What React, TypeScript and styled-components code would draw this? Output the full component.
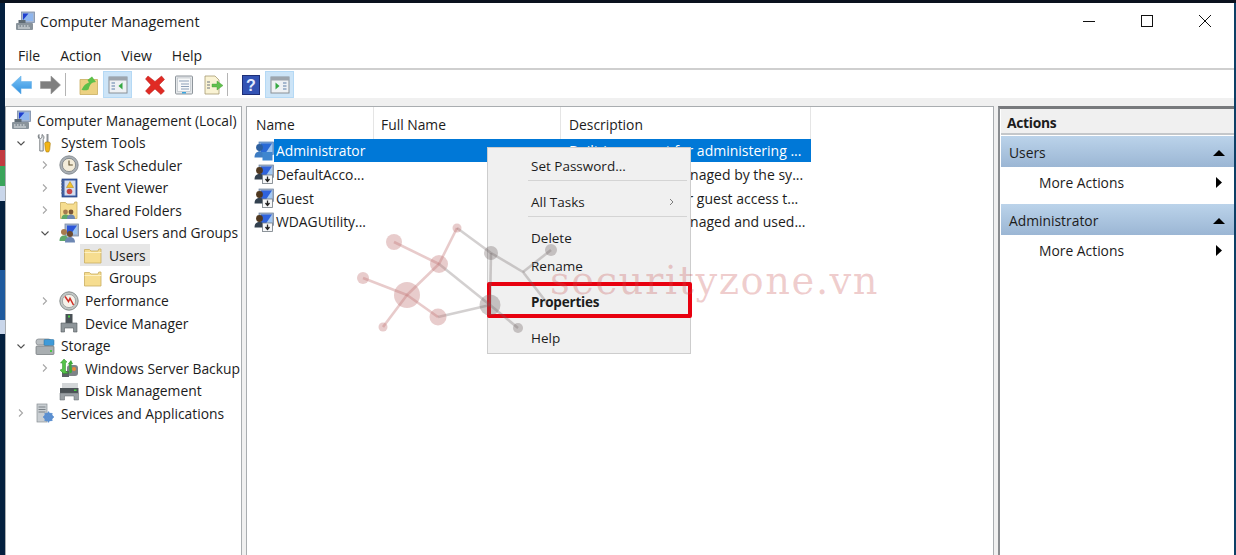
import React from "react";
import styled, { createGlobalStyle } from "styled-components";

const GlobalStyle = createGlobalStyle`
  html, body { margin: 0; padding: 0; background: #0a2340; }
  body { font-family: "Open Sans", "Noto Sans", "Liberation Sans", sans-serif; overflow: hidden; }
  * { box-sizing: border-box; }
`;

const Screen = styled.div`
  position: relative;
  width: 1236px;
  height: 555px;
  display: flex;
  flex-direction: column;
  background: #0a2340;
  overflow: hidden;
`;

const TopEdge = styled.div`
  height: 3px;
  flex: none;
  background: #0a121e;
`;

const Desk = styled.div`
  flex: 1;
  min-height: 0;
  display: flex;
`;

const DesktopStrip = styled.div`
  width: 5px;
  flex: none;
  display: flex;
  flex-direction: column;
  background: #04203f;
`;

const DesktopBit = styled.div<{ $h: number; $c?: string }>`
  height: ${({ $h }) => $h}px;
  flex: none;
  background: ${({ $c }) => $c || "transparent"};
`;

const RightEdge = styled.div`
  width: 2px;
  flex: none;
  background: #0d4066;
`;

const Win = styled.div`
  flex: 1;
  min-width: 0;
  display: flex;
  flex-direction: column;
  background: #fff;
  color: #1c1c1c;
`;

const TitleBar = styled.div`
  height: 38px;
  flex: none;
  display: flex;
  align-items: center;
  padding: 0 0 2px 10px;
  font-size: 14.3px;
`;

const TitleText = styled.span`
  margin-left: 5px;
  flex: 1;
`;

const WinButton = styled.div`
  width: 58px;
  height: 36px;
  display: flex;
  align-items: center;
  justify-content: center;
`;

const WinButtons = styled.div`
  display: flex;
`;

const MenuBar = styled.div`
  height: 29px;
  flex: none;
  display: flex;
  align-items: center;
  padding: 2px 0 0 13px;
  gap: 20px;
  font-size: 14px;
  border-bottom: 2px solid #cfcfcf;
`;

const Toolbar = styled.div`
  height: 28px;
  flex: none;
  display: flex;
  align-items: stretch;
  padding: 1px 0 0 2px;
`;

const ToolButton = styled.div<{ $on?: boolean }>`
  width: 29px;
  display: flex;
  align-items: center;
  justify-content: center;
  background: ${({ $on }) => ($on ? "#cce4f7" : "transparent")};
  box-shadow: ${({ $on }) => ($on ? "inset 0 0 0 1px #b5d9f5" : "none")};
`;

const ToolSep = styled.div<{ $w: number; $hide?: boolean }>`
  width: ${({ $w }) => $w}px;
  margin: 2px 0;
  border-left: 1px solid ${({ $hide }) => ($hide ? "transparent" : "#b4b4b4")};
`;

const Panes = styled.div`
  flex: 1;
  min-height: 0;
  display: grid;
  grid-template-columns: 237px 748px 237px;
  column-gap: 4px;
  padding-top: 8px;
  background: #f0f0f0;
`;

const TreePane = styled.div`
  background: #fff;
  border: 1px solid #a9adb0;
  border-bottom: 0;
  padding-top: 2px;
  overflow: hidden;
  font-size: 13.85px;
  white-space: nowrap;
`;

const TreeRow = styled.div<{ $level: number }>`
  height: 22.54px;
  display: flex;
  align-items: center;
  padding-left: ${({ $level }) => ($level === 0 ? 2 : 7 + 24 * ($level - 1))}px;
`;

const Twisty = styled.span`
  width: 16px;
  flex: none;
  margin-right: 3px;
  display: flex;
  justify-content: center;
`;

const TreeNode = styled.div<{ $active?: boolean }>`
  display: inline-flex;
  align-items: center;
  height: 22px;
  gap: 6px;
  padding: 0 4px 0 3px;
  background: ${({ $active }) => ($active ? "#e6e6e6" : "transparent")};
`;

const ListPane = styled.div`
  position: relative;
  background: #fff;
  border: 1px solid #a9adb0;
  border-bottom: 0;
  font-size: 13.85px;
`;

const ListHead = styled.div`
  height: 32px;
  display: flex;
  align-items: center;
  padding-left: 1px;
`;

const HeadCell = styled.div<{ $w: number; $pad?: number }>`
  width: ${({ $w }) => $w}px;
  height: 100%;
  padding-left: ${({ $pad }) => $pad ?? 8}px;
  padding-top: 2px;
  display: flex;
  align-items: center;
  border-right: 1px solid #e5e5e5;
`;

const ListRow = styled.div`
  height: 23.67px;
  display: flex;
  align-items: center;
  padding-left: 7px;
  white-space: nowrap;
`;

const RowBody = styled.div<{ $active?: boolean }>`
  width: 537px;
  height: 23px;
  display: flex;
  align-items: center;
  padding-left: 2px;
  color: ${({ $active }) => ($active ? "#fff" : "inherit")};
  background: ${({ $active }) => ($active ? "#0078d7" : "transparent")};
`;

const RowName = styled.span`
  width: 293px;
  flex: none;
`;

const RowText = styled.span`
  font-size: 14px;
`;

const ContextMenu = styled.div`
  position: absolute;
  left: 240px;
  top: 40px;
  width: 204px;
  padding: 4px 0 1px;
  background: #f0f0f0;
  border: 1px solid #cdcdcd;
  font-size: 13.5px;
  z-index: 2;
`;

const MenuItem = styled.div<{ $bold?: boolean }>`
  height: 28px;
  display: flex;
  align-items: center;
  justify-content: space-between;
  padding: 0 16px 0 43px;
  font-weight: ${({ $bold }) => ($bold ? 700 : 400)};
  letter-spacing: ${({ $bold }) => ($bold ? "-0.2px" : "0")};
`;

const MenuSep = styled.div<{ $hide?: boolean }>`
  height: 8px;
  margin-left: 40px;
  margin-right: 3px;
  &::before {
    content: "";
    display: block;
    height: 1px;
    background: ${({ $hide }) => ($hide ? "transparent" : "#d4d4d4")};
  }
`;

const RedBox = styled.div`
  position: absolute;
  left: -1px;
  right: -2px;
  top: 134px;
  height: 36px;
  border: 4px solid #e8000f;
  border-radius: 2px;
`;

const ActionsPane = styled.div`
  background: #fff;
  border-left: 2px solid #8a8d90;
  border-top: 3px solid #77797c;
  padding-left: 1px;
  font-size: 13.85px;
`;

const ActionsHead = styled.div`
  height: 26px;
  display: flex;
  align-items: center;
  padding: 2px 0 0 6px;
  background: #f0f0f0;
  border-bottom: 2px solid #c4c7ca;
  font-weight: 700;
  letter-spacing: -0.3px;
`;

const ActionGroup = styled.div`
  height: 31px;
  display: flex;
  align-items: center;
  justify-content: space-between;
  padding: 2px 10px 0 8px;
  margin-top: 1px;
  background: linear-gradient(#bbd3ea, #9bb6d4);
`;

const ActionRow = styled.div`
  height: 36px;
  display: flex;
  align-items: center;
  justify-content: space-between;
  padding: 0 13px 5px 38px;
`;

const WatermarkArt = styled.svg`
  position: absolute;
  left: 350px;
  top: 220px;
  pointer-events: none;
  z-index: 3;
`;

const WatermarkText = styled.div`
  position: absolute;
  left: 550px;
  top: 258px;
  font-family: "DejaVu Serif", serif;
  font-size: 38.5px;
  letter-spacing: 1.5px;
  line-height: 46px;
  color: rgba(200, 80, 80, 0.28);
  pointer-events: none;
  z-index: 3;
`;

type IconProps = { size?: number };

const Svg = ({ size = 20, children }: IconProps & { children: React.ReactNode }) => (
  <svg width={size} height={size} viewBox="0 0 20 20" style={{ flex: "none", display: "block" }}>
    {children}
  </svg>
);

const ComputerIcon = () => (
  <Svg>
    <rect x="6.5" y="1" width="13" height="10.5" fill="#a4b6d0" stroke="#7c8ca6" strokeWidth="0.8" />
    <rect x="8" y="2.5" width="10" height="7.5" fill="#8fb6ee" />
    <path d="M8 2.5h5.5L8 9z" fill="#1e3fd0" />
    <rect x="1" y="12" width="17" height="7" rx="1" fill="#89939b" />
    <rect x="3.5" y="9" width="7" height="3" fill="#5f6b74" />
    <path d="M3 15h1.5M6 15h1.5M9 15h1.5M12 15h1.5M3 17h12" stroke="#e6eaec" strokeWidth="1" />
  </Svg>
);

const ToolsIcon = () => (
  <Svg>
    <path d="M4 1.5v3l1.5 1 1.5-1v-3c2 1 2.6 3.3 1.2 5v11.5H4.8V6.5C3.2 5 2.5 3 4 1.5z" fill="#eceef0" stroke="#6e7478" strokeWidth="0.9" />
    <rect x="11.5" y="1" width="2" height="8" fill="#8d9296" />
    <path d="M10.5 9h4l.8 1.5-.6 6-1 2.5h-2.4l-1-2.5-.6-6z" fill="#f2b517" stroke="#a97b08" strokeWidth="0.6" />
  </Svg>
);

const ClockIcon = () => (
  <Svg>
    <circle cx="10" cy="10" r="9.2" fill="#a9afb4" stroke="#7c8388" strokeWidth="0.8" />
    <circle cx="10" cy="10" r="6.6" fill="#f3ecd9" stroke="#6e7478" strokeWidth="0.7" />
    <path d="M10 5.5V10h3.8" fill="none" stroke="#5b4c2a" strokeWidth="1.1" />
  </Svg>
);

const EventIcon = () => (
  <Svg>
    <rect x="3" y="1" width="15" height="18" fill="#3c5fa8" stroke="#24407e" strokeWidth="0.7" />
    <rect x="5.5" y="2.5" width="11" height="15" fill="#d5ddee" />
    <path d="M2 3h3M2 6h3M2 9h3M2 12h3M2 15h3" stroke="#5a6a8c" strokeWidth="1" />
    <path d="M11 3.5l3.5 6h-7z" fill="#f3c22a" stroke="#a8810e" strokeWidth="0.5" />
    <circle cx="10.5" cy="13.5" r="2.8" fill="#c9474a" />
  </Svg>
);

const FolderIcon = ({ size = 20 }: IconProps) => (
  <Svg size={size}>
    <path d="M1.5 4.5h5l1.5 1.5h7l.8-2 2.2 0v14h-16.5z" fill="#f6dd90" stroke="#c9ad5f" strokeWidth="0.8" />
    <path d="M1.5 7.5h17" stroke="#fdf1c4" strokeWidth="1" />
  </Svg>
);

const SharedIcon = () => (
  <Svg>
    <path d="M1.5 2.5h5l1.5 1.5h7l.8-2 2.2 0v16.5h-16.5z" fill="#f6dd90" stroke="#c9ad5f" strokeWidth="0.8" />
    <circle cx="6.5" cy="12" r="2.4" fill="#a67a4e" />
    <path d="M2.5 19c0-3.5 1.8-4.5 4-4.5s4 1 4 4.5z" fill="#5fa86a" />
    <circle cx="12" cy="12" r="2.4" fill="#7a5637" />
    <path d="M8 19c0-3.5 1.8-4.5 4-4.5s4 1 4 4.5z" fill="#6d87b3" />
  </Svg>
);

const LocalUsersIcon = () => (
  <Svg>
    <rect x="6" y="1" width="13.5" height="12" fill="#a4b6d0" stroke="#7c8ca6" strokeWidth="0.8" />
    <rect x="8" y="2.5" width="10" height="8.5" fill="#2c56d8" />
    <path d="M18 2.5v8.5h-6z" fill="#9cc4f0" />
    <circle cx="5" cy="9" r="3" fill="#a67a4e" />
    <path d="M.5 18c0-4 2-5.5 4.5-5.5s4.5 1.5 4.5 5.5z" fill="#5fa86a" />
    <circle cx="11" cy="11" r="3" fill="#6b4a2e" />
    <path d="M6 19.5c0-4 2.3-5.5 5-5.5s5 1.5 5 5.5z" fill="#6d87b3" />
  </Svg>
);

const PerformanceIcon = () => (
  <Svg>
    <circle cx="10" cy="10" r="9.2" fill="#c2c6c4" stroke="#7e8583" strokeWidth="0.9" />
    <circle cx="10" cy="10" r="6.6" fill="#f6f2ea" stroke="#8b9190" strokeWidth="0.7" />
    <path d="M6 5.5l3.5 5 1.5-3 3.5 6.5" fill="none" stroke="#cf2b22" strokeWidth="1.5" />
  </Svg>
);

const DeviceIcon = () => (
  <Svg>
    <rect x="6.5" y="1" width="7" height="9" fill="#4b5257" />
    <rect x="9" y="2.5" width="2" height="2" fill="#4fd04a" />
    <path d="M2 10h16v9h-3.5v-4h-9v4H2z" fill="#8f969a" stroke="#555c60" strokeWidth="0.6" />
  </Svg>
);

const StorageIcon = () => (
  <Svg>
    <rect x="1" y="3" width="15" height="6" rx="2.5" fill="#b9bec1" stroke="#7b8185" strokeWidth="0.7" />
    <rect x="9" y="3.5" width="10" height="6" rx="1" fill="#3f9ad8" stroke="#2a6e9f" strokeWidth="0.5" />
    <rect x="1" y="10" width="18" height="8.5" rx="1" fill="#a9aeb1" stroke="#6d7377" strokeWidth="0.7" />
    <rect x="15" y="14" width="2" height="2" fill="#48c844" />
  </Svg>
);

const BackupIcon = () => (
  <Svg>
    <rect x="8" y="7" width="11" height="11" rx="3" fill="#7e8488" />
    <rect x="3" y="13" width="7" height="6" fill="#5c6266" />
    <path d="M5 1l3 3-1.5.5V13l3 2-5 .5-3.5-3.5 2.5-1V5L1.5 5z" fill="#55c348" stroke="#2a8a26" strokeWidth="0.5" />
    <path d="M12 2l2 4-1.5.3.5 8-2.5 1.5-.5-9.5-1.5.2z" fill="#3fa83a" />
    <circle cx="15" cy="11" r="2" fill="#e88a3a" />
  </Svg>
);

const DiskIcon = () => (
  <Svg>
    <rect x="3" y="2" width="16" height="6" fill="#d3d6d8" />
    <rect x="1" y="7" width="18.5" height="5" fill="#4b5256" />
    <rect x="15" y="8.5" width="2.5" height="1.5" fill="#48d044" />
    <path d="M1 12h18.5v7H15v-4H5.5v4H1z" fill="#9aa0a4" stroke="#5f6569" strokeWidth="0.5" />
  </Svg>
);

const ServicesIcon = () => (
  <Svg>
    <rect x="2" y="1" width="10" height="18" fill="#c9ced2" stroke="#888f94" strokeWidth="0.7" />
    <path d="M3.5 4h7M3.5 6.5h7M3.5 9h7" stroke="#7a8187" strokeWidth="1" />
    <circle cx="13.5" cy="14" r="4.6" fill="#5b8fd0" />
    <circle cx="13.5" cy="14" r="1.8" fill="#e8eef6" />
    <path d="M13.5 8.5v11M8 14h11M9.7 10.2l7.6 7.6M17.3 10.2l-7.6 7.6" stroke="#5b8fd0" strokeWidth="1.3" />
  </Svg>
);

const UserDownIcon = () => (
  <Svg>
    <rect x="5" y="1" width="14.5" height="12.5" fill="#9fb2cc" stroke="#6d7f99" strokeWidth="0.7" />
    <rect x="7" y="2.5" width="11" height="9" fill="#2f63dc" />
    <path d="M18 2.5v9h-6z" fill="#a3c8f2" />
    <circle cx="5.5" cy="6.5" r="3.4" fill="#50381f" />
    <path d="M.5 15.5c0-4 2.2-5.5 5-5.5s5 1.5 5 5.5z" fill="#33414f" />
    <rect x="8.5" y="11" width="10" height="8.5" fill="#f6f7f8" stroke="#737b82" strokeWidth="0.8" />
    <path d="M13.5 12.5v4M11.5 15l2 2.5 2-2.5" fill="none" stroke="#222" strokeWidth="1.3" />
  </Svg>
);

const AdminIcon = () => (
  <Svg>
    <rect x="5" y="1" width="14.5" height="12.5" fill="#7fa7d8" stroke="#4f7db5" strokeWidth="0.7" />
    <rect x="7" y="2.5" width="11" height="9" fill="#2a6ad6" />
    <path d="M18 2.5v9h-6z" fill="#9cc6f2" />
    <circle cx="5.5" cy="6.5" r="3.4" fill="#2d5f9e" />
    <path d="M.5 16.5c0-4 2.2-6 5-6s5 2 5 6z" fill="#3d7cc2" />
    <rect x="8.5" y="11" width="10" height="8.5" fill="#3f86cf" />
  </Svg>
);

const BackIcon = () => (
  <svg width="21" height="20" viewBox="0 0 21 20" style={{ display: "block" }}>
    <defs>
      <linearGradient id="backArrow" x1="0" y1="0" x2="0" y2="1">
        <stop offset="0" stopColor="#7cc4f5" />
        <stop offset="1" stopColor="#2f8fe0" />
      </linearGradient>
    </defs>
    <path d="M10 1L.5 10l9.5 9v-5.5h10.5v-7H10z" fill="url(#backArrow)" stroke="#6cb4ea" strokeWidth="0.6" />
  </svg>
);

const ForwardIcon = () => (
  <svg width="21" height="20" viewBox="0 0 21 20" style={{ display: "block" }}>
    <path d="M11 1l9.5 9-9.5 9v-5.5H.5v-7H11z" fill="#7f7f7f" stroke="#969696" strokeWidth="0.6" />
  </svg>
);

const UpFolderIcon = () => (
  <Svg>
    <path d="M1 4.5h17.5v15H1z" fill="#ecd182" stroke="#c9ad5f" strokeWidth="0.8" />
    <path d="M3 14c1.5-3.5 4-5.5 7-6.5L8.5 5 13 1.500 17 7l-3 .5c-2.5 1-3.5 3.5-4.5 7-2 1-4 1-6.5 .5-.4-.4-.5-.6 0-1z" fill="#5dc04a" />
  </Svg>
);

const PaneLeftIcon = () => (
  <Svg>
    <rect x="1" y="2" width="18" height="16" fill="#eef1f4" stroke="#8a9097" strokeWidth="1" />
    <rect x="1" y="2" width="18" height="3.5" fill="#9da5ad" />
    <path d="M3.5 8h3.5M3.5 11h3.5M3.5 14h3.5" stroke="#5d7fa8" strokeWidth="1.2" />
    <path d="M14.5 7.5v7l-4-3.5z" fill="#36a842" />
  </Svg>
);

const PaneRightIcon = () => (
  <Svg>
    <rect x="1" y="2" width="18" height="16" fill="#eef1f4" stroke="#8a9097" strokeWidth="1" />
    <rect x="1" y="2" width="18" height="3.5" fill="#9da5ad" />
    <path d="M13 8h3.5M13 11h3.5M13 14h3.5" stroke="#5d7fa8" strokeWidth="1.2" />
    <path d="M5.5 7.5v7l4-3.5z" fill="#36a842" />
  </Svg>
);

const DeleteIcon = () => (
  <Svg>
    <path d="M3 1l7 5.5L16.5 1l3 3.5L14 10l5.5 6-3.5 3.5-6-5.5-6 5.5L.5 16 6 10 .5 4z" fill="#e02a24" stroke="#b81f1a" strokeWidth="0.5" />
  </Svg>
);

const PropertiesIcon = () => (
  <Svg>
    <rect x="1.5" y="1" width="17" height="18" rx="1" fill="#e4e7ea" stroke="#8e959b" strokeWidth="1" />
    <rect x="3.5" y="3" width="13" height="13.5" fill="#f8f9fa" stroke="#b5bbc0" strokeWidth="0.6" />
    <path d="M5 6h10M7 9h8M7 11.5h8M7 14h8" stroke="#8da0b8" strokeWidth="1" />
    <rect x="8" y="17" width="4" height="1.5" fill="#3aa5e0" />
  </Svg>
);

const ExportIcon = () => (
  <Svg>
    <path d="M2 1h10l4 4v14H2z" fill="#faf3d4" stroke="#a69a72" strokeWidth="0.8" />
    <path d="M4 7h3M4 10h3M4 13h3" stroke="#6b7480" strokeWidth="1.1" />
    <path d="M9 9h5V6l6 4.5-6 4.5v-3H9z" fill="#62c04e" stroke="#3d9a30" strokeWidth="0.4" />
  </Svg>
);

const HelpIcon = () => (
  <svg width="18" height="20" viewBox="0 0 18 20" style={{ display: "block" }}>
    <rect x="0.5" y="0.5" width="17" height="19" fill="#3353b4" stroke="#1e2f78" />
    <text x="9" y="16" textAnchor="middle" fontSize="16" fontWeight="700" fill="#e4ecff" fontFamily="Liberation Sans, sans-serif">?</text>
  </svg>
);

const Chevron = ({ open }: { open?: boolean }) => (
  <svg width="10" height="10" viewBox="0 0 10 10" style={{ display: "block" }}>
    <path
      d={open ? "M1.5 3.5L5 7l3.5-3.5" : "M3 1.5L6.5 5 3 8.5"}
      fill="none"
      stroke={open ? "#505050" : "#a6a6a6"}
      strokeWidth="1.1"
    />
  </svg>
);

const CollapseArrow = () => (
  <svg width="12" height="6" viewBox="0 0 12 6" style={{ display: "block" }}>
    <path d="M6 0l6 6H0z" fill="#000" />
  </svg>
);

const MoreArrow = () => (
  <svg width="6" height="11" viewBox="0 0 6 11" style={{ display: "block" }}>
    <path d="M0 0l6 5.5L0 11z" fill="#000" />
  </svg>
);

const SubArrow = () => (
  <svg width="5" height="8" viewBox="0 0 5 8" style={{ display: "block" }}>
    <path d="M1 1l3 3-3 3" fill="none" stroke="#707070" strokeWidth="0.9" />
  </svg>
);

const treeItems = [
  { level: 0, label: "Computer Management (Local)", icon: <ComputerIcon /> },
  { level: 1, label: "System Tools", icon: <ToolsIcon />, twisty: "open" },
  { level: 2, label: "Task Scheduler", icon: <ClockIcon />, twisty: "closed" },
  { level: 2, label: "Event Viewer", icon: <EventIcon />, twisty: "closed" },
  { level: 2, label: "Shared Folders", icon: <SharedIcon />, twisty: "closed" },
  { level: 2, label: "Local Users and Groups", icon: <LocalUsersIcon />, twisty: "open" },
  { level: 3, label: "Users", icon: <FolderIcon />, active: true },
  { level: 3, label: "Groups", icon: <FolderIcon /> },
  { level: 2, label: "Performance", icon: <PerformanceIcon />, twisty: "closed" },
  { level: 2, label: "Device Manager", icon: <DeviceIcon /> },
  { level: 1, label: "Storage", icon: <StorageIcon />, twisty: "open" },
  { level: 2, label: "Windows Server Backup", icon: <BackupIcon />, twisty: "closed" },
  { level: 2, label: "Disk Management", icon: <DiskIcon /> },
  { level: 1, label: "Services and Applications", icon: <ServicesIcon />, twisty: "closed" },
];

const users = [
  { name: "Administrator", text: "Built-in account for administering ...", active: true },
  { name: "DefaultAcco...", text: "A user account managed by the sy..." },
  { name: "Guest", text: "Built-in account for guest access t..." },
  { name: "WDAGUtility...", text: "A user account managed and used..." },
];

const netEdges = [
  [394, 242, 439, 264], [457, 228, 439, 264], [457, 228, 491, 253], [491, 253, 523, 272],
  [523, 272, 551, 250], [523, 272, 547, 303], [491, 253, 490, 305], [439, 264, 490, 305],
  [439, 264, 407, 295], [363, 278, 407, 295], [407, 295, 438, 317], [407, 295, 383, 327],
  [438, 317, 490, 305], [490, 305, 518, 328],
];

const netNodes = [
  [394, 242, 8], [457, 228, 4.5], [439, 264, 9], [491, 253, 7], [551, 250, 6], [363, 278, 6],
  [407, 295, 13], [438, 317, 8.5], [490, 305, 10.5], [518, 328, 5], [383, 327, 4.5],
];

const isGrey = (x: number) => x > 470;

export default function App() {
  return (
    <Screen>
      <GlobalStyle />
      <TopEdge />
      <Desk>
        <DesktopStrip>
          <DesktopBit $h={147} />
          <DesktopBit $h={16} $c="#c23a40" />
          <DesktopBit $h={20} $c="#3aa45a" />
          <DesktopBit $h={15} $c="#c9d6ea" />
          <DesktopBit $h={69} />
          <DesktopBit $h={50} $c="#1f5a9e" />
          <DesktopBit $h={14} $c="#c9d6ea" />
        </DesktopStrip>
        <Win>
          <TitleBar>
            <ComputerIcon />
            <TitleText>Computer Management</TitleText>
            <WinButtons>
              <WinButton>
                <svg width="12" height="12" viewBox="0 0 12 12"><path d="M0 6.5h12" stroke="#111" /></svg>
              </WinButton>
              <WinButton>
                <svg width="12" height="12" viewBox="0 0 12 12"><rect x="0.5" y="0.5" width="11" height="11" fill="none" stroke="#111" /></svg>
              </WinButton>
              <WinButton>
                <svg width="12" height="12" viewBox="0 0 12 12"><path d="M0 0l12 12M12 0L0 12" stroke="#111" /></svg>
              </WinButton>
            </WinButtons>
          </TitleBar>
          <MenuBar>
            <span>File</span>
            <span>Action</span>
            <span>View</span>
            <span>Help</span>
          </MenuBar>
          <Toolbar>
            <ToolButton><BackIcon /></ToolButton>
            <ToolButton><ForwardIcon /></ToolButton>
            <ToolSep $w={9} />
            <ToolButton><UpFolderIcon /></ToolButton>
            <ToolButton $on><PaneLeftIcon /></ToolButton>
            <ToolSep $w={8} $hide />
            <ToolButton><DeleteIcon /></ToolButton>
            <ToolButton><PropertiesIcon /></ToolButton>
            <ToolButton><ExportIcon /></ToolButton>
            <ToolSep $w={9} />
            <ToolButton><HelpIcon /></ToolButton>
            <ToolButton $on><PaneRightIcon /></ToolButton>
          </Toolbar>
          <Panes>
            <TreePane>
              {treeItems.map((item) => (
                <TreeRow key={item.label} $level={item.level}>
                  {item.level > 0 && (
                    <Twisty>{item.twisty && <Chevron open={item.twisty === "open"} />}</Twisty>
                  )}
                  <TreeNode $active={item.active}>
                    {item.icon}
                    <span>{item.label}</span>
                  </TreeNode>
                </TreeRow>
              ))}
            </TreePane>
            <ListPane>
              <ListHead>
                <HeadCell $w={126}>Name</HeadCell>
                <HeadCell $w={187} $pad={7}>Full Name</HeadCell>
                <HeadCell $w={250}>Description</HeadCell>
              </ListHead>
              {users.map((user) => (
                <ListRow key={user.name}>
                  {user.active ? <AdminIcon /> : <UserDownIcon />}
                  <RowBody $active={user.active}>
                    <RowName>{user.name}</RowName>
                    <RowText>{user.text}</RowText>
                  </RowBody>
                </ListRow>
              ))}
              <ContextMenu>
                <MenuItem>Set Password...</MenuItem>
                <MenuSep />
                <MenuItem>All Tasks<SubArrow /></MenuItem>
                <MenuSep />
                <MenuItem>Delete</MenuItem>
                <MenuItem>Rename</MenuItem>
                <MenuSep $hide />
                <MenuItem $bold>Properties</MenuItem>
                <MenuSep $hide />
                <MenuItem>Help</MenuItem>
                <RedBox />
              </ContextMenu>
            </ListPane>
            <ActionsPane>
              <ActionsHead>Actions</ActionsHead>
              <ActionGroup>Users<CollapseArrow /></ActionGroup>
              <ActionRow>More Actions<MoreArrow /></ActionRow>
              <ActionGroup>Administrator<CollapseArrow /></ActionGroup>
              <ActionRow>More Actions<MoreArrow /></ActionRow>
            </ActionsPane>
          </Panes>
        </Win>
        <RightEdge />
      </Desk>
      <WatermarkArt width="220" height="120" viewBox="350 220 220 120">
        {netEdges.map(([a, b, c, d]) => (
          <line
            key={`${a}-${b}-${c}-${d}`}
            x1={a}
            y1={b}
            x2={c}
            y2={d}
            stroke={isGrey(Math.max(a, c)) ? "rgba(110,100,100,0.3)" : "rgba(190,110,110,0.36)"}
            strokeWidth="2.6"
          />
        ))}
        {netNodes.map(([x, y, r]) => (
          <circle
            key={`${x}-${y}`}
            cx={x}
            cy={y}
            r={r}
            fill={isGrey(x) ? "rgba(110,100,100,0.34)" : "rgba(195,120,120,0.38)"}
          />
        ))}
      </WatermarkArt>
      <WatermarkText>securityzone.vn</WatermarkText>
    </Screen>
  );
}
